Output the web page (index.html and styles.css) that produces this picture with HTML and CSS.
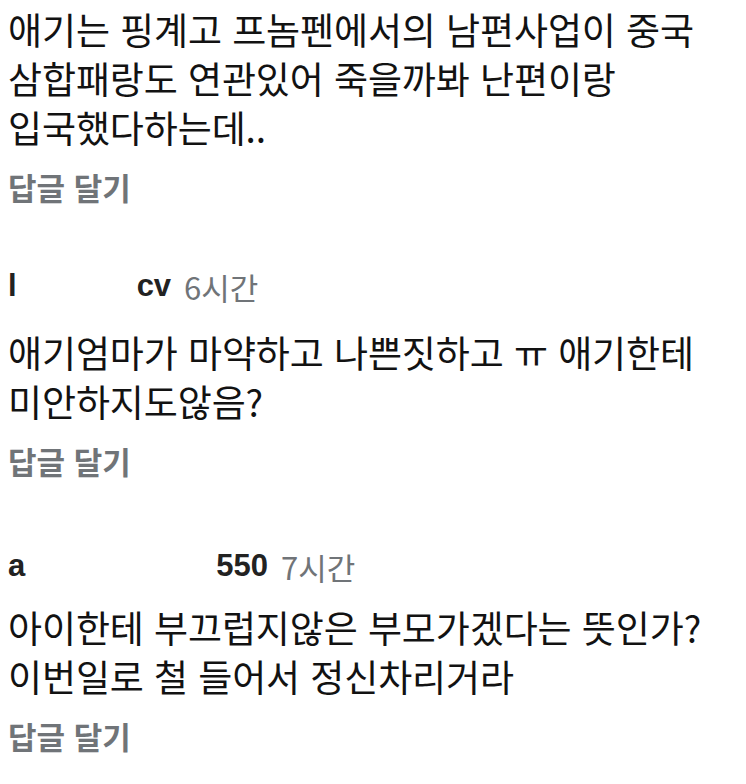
FILE: index.html
```html
<!DOCTYPE html>
<html lang="ko">
<head>
<meta charset="utf-8">
<link rel="stylesheet" href="styles.css">
</head>
<body>
<div class="thread">
  <div class="comment first">
    <p class="text">애기는 핑계고 프놈펜에서의 남편사업이 중국<br>삼합패랑도 연관있어 죽을까봐 난편이랑<br>입국했다하는데..</p>
    <div class="reply">답글 달기</div>
  </div>
  <div class="comment">
    <div class="meta">
      <span class="user">l<span class="redacted redacted-a"></span>cv</span>
      <span class="time">6시간</span>
    </div>
    <p class="text">애기엄마가 마약하고 나쁜짓하고 ㅠ 애기한테<br>미안하지도않음?</p>
    <div class="reply">답글 달기</div>
  </div>
  <div class="comment">
    <div class="meta low">
      <span class="user">a<span class="redacted redacted-b"></span>550</span>
      <span class="time">7시간</span>
    </div>
    <p class="text">아이한테 부끄럽지않은 부모가겠다는 뜻인가?<br>이번일로 철 들어서 정신차리거라</p>
    <div class="reply">답글 달기</div>
  </div>
</div>
</body>
</html>
```

FILE: styles.css
```css
html, body {
  margin: 0;
  padding: 0;
  background: #ffffff;
}

body {
  font-family: "Noto Sans CJK KR", "Noto Sans", sans-serif;
  color: #121212;
}

.thread {
  display: flex;
  flex-direction: column;
  padding: 5px 8px 0 8px;
}

.comment {
  display: flex;
  flex-direction: column;
  margin-top: 59px;
}

.comment.first {
  margin-top: 0;
}

.text {
  margin: 0;
  font-size: 37px;
  line-height: 49px;
  letter-spacing: -0.1px;
}

.reply {
  margin-top: 15px;
  font-size: 31px;
  line-height: 40px;
  font-weight: 700;
  color: #707478;
}

.meta {
  display: flex;
  align-items: center;
  gap: 13px;
  height: 40px;
  margin-bottom: 22px;
}

.meta.low {
  margin-top: 6px;
  margin-bottom: 17px;
}

.user {
  display: flex;
  align-items: baseline;
  font-family: "Liberation Sans", "Noto Sans CJK KR", sans-serif;
  font-size: 31px;
  font-weight: 700;
  color: #222222;
}

.redacted {
  display: inline-block;
  height: 1px;
}

.redacted-a {
  width: 120px;
}

.redacted-b {
  width: 191px;
}

.time {
  font-size: 31px;
  color: #707478;
}
```
